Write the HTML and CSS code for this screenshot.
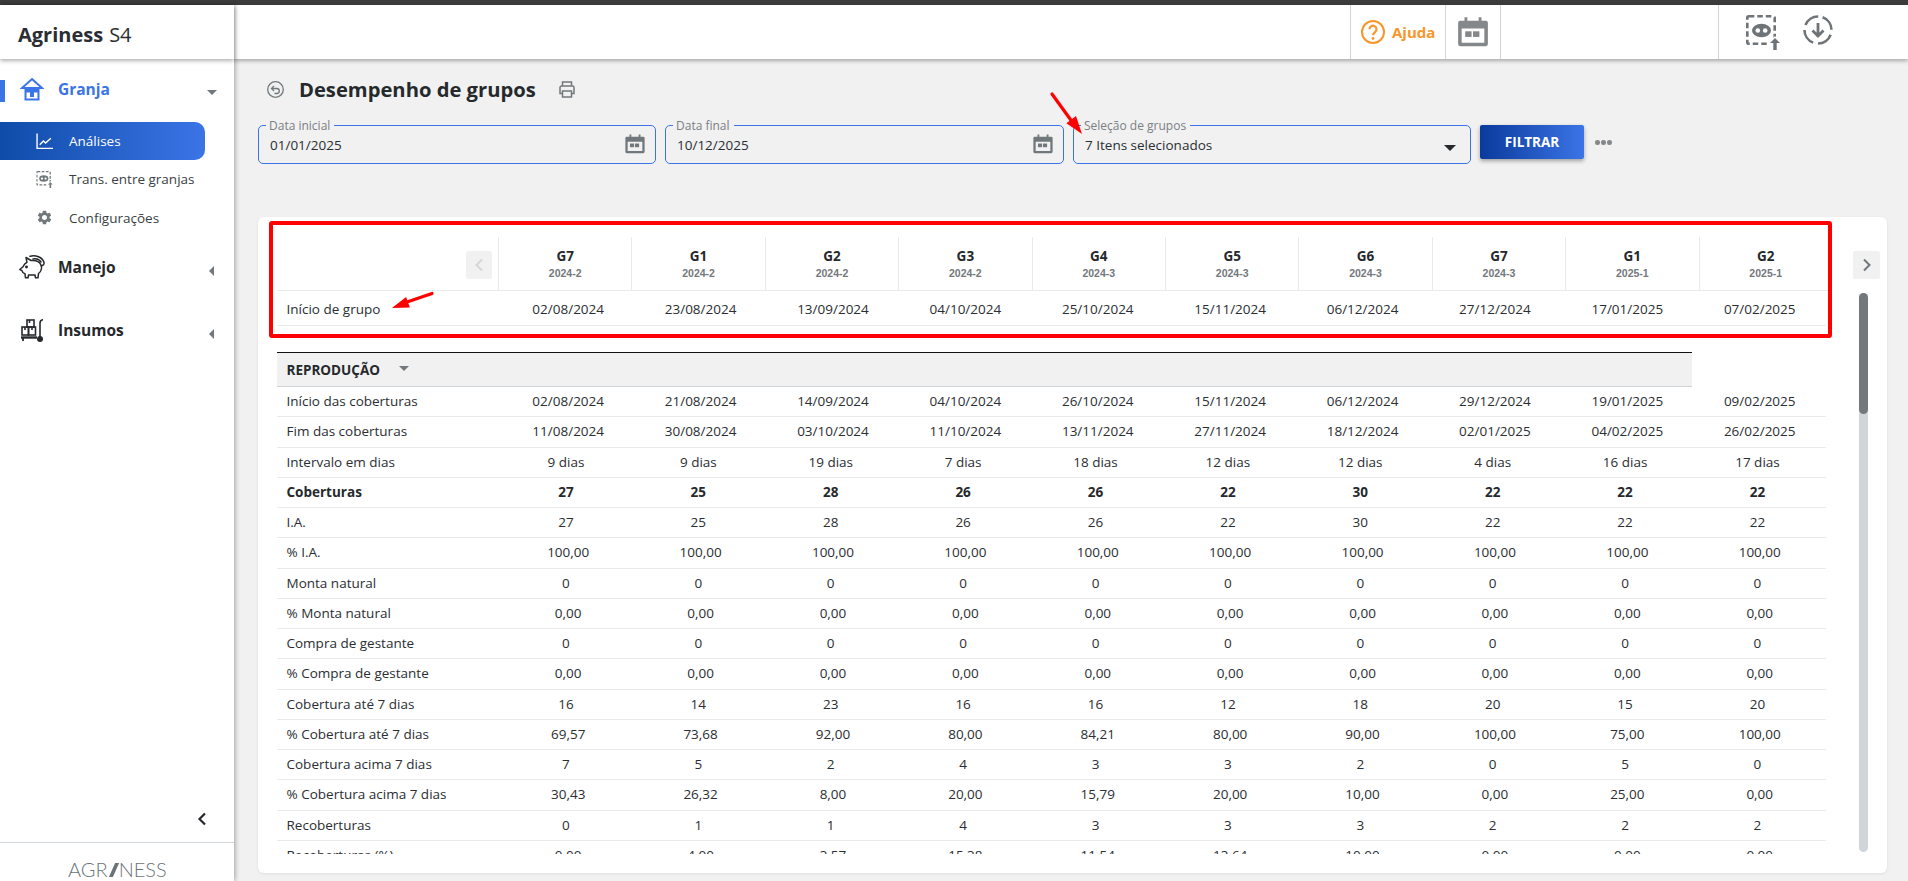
FILE: index.html
```html
<!DOCTYPE html>
<html lang="pt-BR">
<head>
<meta charset="utf-8">
<title>Desempenho de grupos</title>
<link rel="stylesheet" href="styles.css">
</head>
<body>
<svg class="sprite" aria-hidden="true">
  <symbol id="i-cal" viewBox="0 0 24 24"><path fill-rule="evenodd" d="M3 4h3V1.500h2V4h8V1.500h2V4h3a1.500 1.500 0 0 1 1.500 1.500v15A1.500 1.500 0 0 1 21 22H3a1.500 1.500 0 0 1-1.500-1.500v-15A1.500 1.500 0 0 1 3 4zm1 5.500V19.500h16V9.500z"/><rect x="6.500" y="11.500" width="4.500" height="4"/><rect x="12" y="11.500" width="4.500" height="4"/></symbol>
  <symbol id="i-eye" viewBox="0 0 34 35"><rect x="1.300" y="1.300" width="27.400" height="27.400" rx="1.500" fill="none" stroke="currentColor" stroke-width="2.600" stroke-dasharray="5.500 3"/><ellipse cx="15.500" cy="15.500" rx="9.500" ry="6.800"/><circle cx="11.800" cy="15.500" r="2.300" fill="#fff"/><circle cx="19.200" cy="15.500" r="2.300" fill="#fff"/><path d="M29 21L36 28H36V36H22V28z" fill="#fff"/><path d="M29 23l5 5h-3.300v7h-3.400v-7H24z"/></symbol>
</svg>

<div class="strip"></div>
<div class="app">
  <aside class="sidebar">
    <div class="brand"><b>Agriness</b> S4</div>
    <nav class="nav">
      <div class="group active">
        <svg class="g-icon" viewBox="0 0 24 24" fill="none" stroke="#3b74e6" stroke-width="2"><path d="M12 2L22 11H2z"/><path d="M5.500 11.500V22.500H18.500V11.500"/><path d="M5.500 12H18.500V15.500H14V20H10V15.500H5.500z" fill="#3b74e6" stroke="none"/></svg>
        <span class="g-label">Granja</span>
        <span class="tri-down"></span>
      </div>
      <a class="sub current">
        <svg class="s-icon" viewBox="0 0 16 15" fill="none" stroke="#fff" stroke-width="1.300"><path d="M1 0v14h15"/><path d="M3.500 10.500l3.500-3.500 2 2 5-4.500"/></svg>
        <span>Análises</span>
      </a>
      <a class="sub">
        <svg class="s-icon" viewBox="0 0 34 35" color="#71787c" fill="currentColor"><use href="#i-eye"/></svg>
        <span>Trans. entre granjas</span>
      </a>
      <a class="sub">
        <svg class="s-icon" viewBox="0 0 24 24" fill="#71787c"><path d="M19.140 12.940c.04-.3.06-.61.06-.94 0-.32-.02-.64-.07-.94l2.030-1.580c.18-.14.23-.41.12-.61l-1.920-3.320c-.12-.22-.37-.29-.59-.22l-2.390.96c-.5-.38-1.030-.7-1.620-.94l-.36-2.540c-.04-.24-.24-.41-.48-.41h-3.840c-.24 0-.43.17-.47.41l-.36 2.540c-.59.24-1.130.57-1.620.94l-2.390-.96c-.22-.08-.47 0-.59.22L2.740 8.870c-.12.21-.08.47.12.61l2.030 1.580c-.05.3-.09.63-.09.94s.02.64.07.94l-2.030 1.580c-.18.14-.23.41-.12.61l1.920 3.320c.12.22.37.29.59.22l2.390-.96c.5.38 1.030.7 1.620.94l.36 2.540c.05.24.24.41.48.41h3.840c.24 0 .44-.17.47-.41l.36-2.540c.59-.24 1.130-.56 1.620-.94l2.390.96c.22.08.47 0 .59-.22l1.920-3.320c.12-.22.07-.47-.12-.61l-2.010-1.580zM12 15.600c-1.980 0-3.600-1.620-3.600-3.600s1.620-3.600 3.600-3.600 3.600 1.620 3.600 3.600-1.620 3.600-3.600 3.600z"/></svg>
        <span>Configurações</span>
      </a>
      <div class="group">
        <svg class="g-icon pig" viewBox="0 0 26 24" fill="none" stroke="#26292c" stroke-width="1.500" stroke-linejoin="round" stroke-linecap="round"><path d="M.8 14.500L4 11.800C5 9.500 6.500 8 8 7.300L7 2.500l5 3C16.500 5 20.500 6.500 22 10c1.200 3.200 0 6.800-2.500 8.500L19 22.800h-2.500L16 20H9.500L9 22.800H6.500L6 18.800c-2-.6-2.800-2-3-3.200z"/><path d="M11 1.200C16.500-.2 23.500 2 25 7.500c.3 1.800-.8 3.200-2.800 3.200"/><path d="M14 4c3.500-.8 6.500.6 8 3"/><circle cx="7.500" cy="12" r=".7" fill="#26292c"/></svg>
        <span class="g-label dark">Manejo</span>
        <span class="tri-left"></span>
      </div>
      <div class="group">
        <svg class="g-icon cart" viewBox="0 0 24 24" fill="none" stroke="#26292c" stroke-width="1.600"><rect x="7" y="2" width="7" height="7"/><rect x="2" y="9" width="6.500" height="8"/><rect x="8.500" y="9" width="7" height="8"/><path d="M9.500 2v3M5 9v3M12 9v3"/><path d="M1 19.500H17" stroke-width="2.400"/><path d="M23 1.500c-1.800.5-3 1.800-3 3.500v14"/><path d="M3 20v3" stroke-width="1.800"/><circle cx="20" cy="21" r="3" fill="#26292c" stroke="none"/></svg>
        <span class="g-label dark">Insumos</span>
        <span class="tri-left"></span>
      </div>
    </nav>
    <div class="collapse">
      <svg viewBox="0 0 10 14" fill="none" stroke="#26292c" stroke-width="2.200"><path d="M8 1.500L2.500 7 8 12.500"/></svg>
    </div>
    <div class="maker">AGR<i class="slash"></i>NESS</div>
  </aside>

  <div class="content">
    <header class="topbar">
      <div class="t-space"></div>
      <div class="t-help">
        <svg class="help-i" viewBox="0 0 24 24" fill="none" stroke="#f7962b" stroke-width="2"><circle cx="12" cy="12" r="11"/><path d="M8.500 9.300a3.500 3.500 0 1 1 5.500 2.800c-1.200.9-2 1.500-2 3.200" stroke-width="2.200"/><circle cx="12" cy="18.500" r="1.400" fill="#f7962b" stroke="none"/></svg>
        <span>Ajuda</span>
      </div>
      <div class="t-cal"><svg viewBox="0 0 24 24" fill="#85888a"><use href="#i-cal"/></svg></div>
      <div class="t-gap"></div>
      <div class="t-tools">
        <svg class="tool-eye" viewBox="0 0 34 35" color="#6d7377" fill="currentColor"><use href="#i-eye"/></svg>
        <svg class="tool-dl" viewBox="0 0 30 30" fill="none" stroke="#6d7377"><circle cx="15" cy="15" r="13.500" stroke-width="2.600" stroke-dasharray="16.200 5" transform="rotate(-70 15 15)"/><path d="M15 8v13M9.500 15.500L15 21l5.500-5.500" stroke-width="2.800"/></svg>
      </div>
    </header>

    <main class="main">
      <div class="title-row">
        <svg class="back" viewBox="0 0 17 17" fill="none" stroke="#71787c" stroke-width="1.300"><circle cx="8.500" cy="8.500" r="7.800"/><path d="M4.800 7.500h5a2.500 2.500 0 0 1 0 5H7.500"/><path d="M7 5L4.500 7.500 7 10"/></svg>
        <h1>Desempenho de grupos</h1>
        <svg class="print" viewBox="0 0 16 17" fill="none" stroke="#71787c" stroke-width="1.500"><path d="M3.500 5V1h9v4"/><path d="M3.500 12.500H1V6.500A1.500 1.500 0 0 1 2.500 5h11A1.500 1.500 0 0 1 15 6.500v6h-2.500"/><path d="M3.500 10h9v6h-9z"/></svg>
      </div>

      <div class="filters">
        <div class="field">
          <label>Data inicial</label>
          <span class="value">01/01/2025</span>
          <svg class="f-cal" viewBox="0 0 24 24" fill="#71787c"><use href="#i-cal"/></svg>
        </div>
        <div class="field">
          <label>Data final</label>
          <span class="value">10/12/2025</span>
          <svg class="f-cal" viewBox="0 0 24 24" fill="#71787c"><use href="#i-cal"/></svg>
        </div>
        <div class="field">
          <label>Seleção de grupos</label>
          <span class="value">7 Itens selecionados</span>
          <span class="caret"></span>
        </div>
        <button class="btn">FILTRAR</button>
        <div class="dots"><i></i><i></i><i></i></div>
      </div>

      <section class="card">
        <div class="table">
          <div class="thead">
            <div class="h-first"><button class="pager off"><svg viewBox="0 0 10 14" fill="none" stroke="#d4d7da" stroke-width="2"><path d="M8 1.500L2.500 7 8 12.500"/></svg></button></div>
            <div class="h-col"><b>G7</b><small>2024-2</small></div>
            <div class="h-col"><b>G1</b><small>2024-2</small></div>
            <div class="h-col"><b>G2</b><small>2024-2</small></div>
            <div class="h-col"><b>G3</b><small>2024-2</small></div>
            <div class="h-col"><b>G4</b><small>2024-3</small></div>
            <div class="h-col"><b>G5</b><small>2024-3</small></div>
            <div class="h-col"><b>G6</b><small>2024-3</small></div>
            <div class="h-col"><b>G7</b><small>2024-3</small></div>
            <div class="h-col"><b>G1</b><small>2025-1</small></div>
            <div class="h-col"><b>G2</b><small>2025-1</small></div>
          </div>
          <div class="row start"><span>Início de grupo</span><span>02/08/2024</span><span>23/08/2024</span><span>13/09/2024</span><span>04/10/2024</span><span>25/10/2024</span><span>15/11/2024</span><span>06/12/2024</span><span>27/12/2024</span><span>17/01/2025</span><span>07/02/2025</span></div>

          <div class="scroll">
            <div class="section"><b>REPRODUÇÃO</b><span class="tri-down"></span></div>
            <div class="row"><span>Início das coberturas</span><span>02/08/2024</span><span>21/08/2024</span><span>14/09/2024</span><span>04/10/2024</span><span>26/10/2024</span><span>15/11/2024</span><span>06/12/2024</span><span>29/12/2024</span><span>19/01/2025</span><span>09/02/2025</span></div>
            <div class="row"><span>Fim das coberturas</span><span>11/08/2024</span><span>30/08/2024</span><span>03/10/2024</span><span>11/10/2024</span><span>13/11/2024</span><span>27/11/2024</span><span>18/12/2024</span><span>02/01/2025</span><span>04/02/2025</span><span>26/02/2025</span></div>
            <div class="row int"><span>Intervalo em dias</span><span>9 dias</span><span>9 dias</span><span>19 dias</span><span>7 dias</span><span>18 dias</span><span>12 dias</span><span>12 dias</span><span>4 dias</span><span>16 dias</span><span>17 dias</span></div>
            <div class="row int strong"><span>Coberturas</span><span>27</span><span>25</span><span>28</span><span>26</span><span>26</span><span>22</span><span>30</span><span>22</span><span>22</span><span>22</span></div>
            <div class="row int"><span>I.A.</span><span>27</span><span>25</span><span>28</span><span>26</span><span>26</span><span>22</span><span>30</span><span>22</span><span>22</span><span>22</span></div>
            <div class="row"><span>% I.A.</span><span>100,00</span><span>100,00</span><span>100,00</span><span>100,00</span><span>100,00</span><span>100,00</span><span>100,00</span><span>100,00</span><span>100,00</span><span>100,00</span></div>
            <div class="row int"><span>Monta natural</span><span>0</span><span>0</span><span>0</span><span>0</span><span>0</span><span>0</span><span>0</span><span>0</span><span>0</span><span>0</span></div>
            <div class="row"><span>% Monta natural</span><span>0,00</span><span>0,00</span><span>0,00</span><span>0,00</span><span>0,00</span><span>0,00</span><span>0,00</span><span>0,00</span><span>0,00</span><span>0,00</span></div>
            <div class="row int"><span>Compra de gestante</span><span>0</span><span>0</span><span>0</span><span>0</span><span>0</span><span>0</span><span>0</span><span>0</span><span>0</span><span>0</span></div>
            <div class="row"><span>% Compra de gestante</span><span>0,00</span><span>0,00</span><span>0,00</span><span>0,00</span><span>0,00</span><span>0,00</span><span>0,00</span><span>0,00</span><span>0,00</span><span>0,00</span></div>
            <div class="row int"><span>Cobertura até 7 dias</span><span>16</span><span>14</span><span>23</span><span>16</span><span>16</span><span>12</span><span>18</span><span>20</span><span>15</span><span>20</span></div>
            <div class="row"><span>% Cobertura até 7 dias</span><span>69,57</span><span>73,68</span><span>92,00</span><span>80,00</span><span>84,21</span><span>80,00</span><span>90,00</span><span>100,00</span><span>75,00</span><span>100,00</span></div>
            <div class="row int"><span>Cobertura acima 7 dias</span><span>7</span><span>5</span><span>2</span><span>4</span><span>3</span><span>3</span><span>2</span><span>0</span><span>5</span><span>0</span></div>
            <div class="row"><span>% Cobertura acima 7 dias</span><span>30,43</span><span>26,32</span><span>8,00</span><span>20,00</span><span>15,79</span><span>20,00</span><span>10,00</span><span>0,00</span><span>25,00</span><span>0,00</span></div>
            <div class="row int"><span>Recoberturas</span><span>0</span><span>1</span><span>1</span><span>4</span><span>3</span><span>3</span><span>3</span><span>2</span><span>2</span><span>2</span></div>
            <div class="row"><span>Recoberturas (%)</span><span>0,00</span><span>4,00</span><span>3,57</span><span>15,38</span><span>11,54</span><span>13,64</span><span>10,00</span><span>0,00</span><span>0,00</span><span>0,00</span></div>
          </div>
        </div>
        <div class="rail">
          <button class="pager"><svg viewBox="0 0 10 14" fill="none" stroke="#71787c" stroke-width="2"><path d="M2 1.500L7.500 7 2 12.500"/></svg></button>
          <div class="track"><div class="thumb"></div></div>
        </div>
        <div class="redbox"></div>
      </section>
    </main>
  </div>
</div>

<svg class="annot" viewBox="0 0 1908 881" aria-hidden="true">
  <path d="M1052 94L1073 123" stroke="#f00" stroke-width="3.200" stroke-linecap="round"/>
  <path d="M1082 134L1066.400 123.200 1076 116z" fill="#f00"/>
  <path d="M432 293.500L407 302" stroke="#f00" stroke-width="3.200" stroke-linecap="round"/>
  <path d="M392 308L409.900 307.400 406.100 297z" fill="#f00"/>
</svg>
</body>
</html>
```

FILE: styles.css
```css
* { box-sizing: border-box; }
html, body { margin: 0; height: 881px; overflow: hidden; }
body {
  font-family: "Open Sans", "Noto Sans", sans-serif;
  font-size: 13.5px;
  color: #2a2e32;
  background: #f1f1f1;
  position: relative;
}
.sprite { display: none; }
.strip { height: 5px; background: #3c3c3c; }
.app { display: flex; height: 876px; }

/* Sidebar */
.sidebar {
  width: 234px;
  flex: none;
  background: #fff;
  display: flex;
  flex-direction: column;
  box-shadow: 1px 0 5px rgba(0,0,0,.35);
  position: relative;
  z-index: 2;
}
.brand {
  height: 54px;
  padding: 4px 0 0 18px;
  display: flex;
  align-items: center;
  gap: 6px;
  font-size: 20px;
  color: #2a2e32;
  box-shadow: 0 2px 4px rgba(0,0,0,.3);
}
.brand b { font-weight: 700; }
.nav { display: flex; flex-direction: column; }
.group {
  height: 60px;
  margin-bottom: 3px;
  display: flex;
  align-items: center;
  position: relative;
  padding-left: 58px;
}
.group .g-icon { position: absolute; left: 20px; top: 18px; width: 24px; height: 24px; }
.group .pig { left: 19px; width: 26px; }
.group .cart { left: 20px; }
.group.active::before {
  content: "";
  position: absolute;
  left: 0;
  top: 21px;
  width: 5px;
  height: 22px;
  background: #3b74e6;
}
.g-label { font-size: 15.5px; font-weight: 700; color: #3b74e6; }
.g-label.dark { color: #26292c; }
.tri-down {
  width: 0; height: 0;
  border-left: 5px solid transparent;
  border-right: 5px solid transparent;
  border-top: 5px solid #73787c;
}
.group .tri-down { position: absolute; left: 207px; top: 31px; }
.tri-left {
  position: absolute;
  left: 209px;
  top: 29px;
  width: 0; height: 0;
  border-top: 5px solid transparent;
  border-bottom: 5px solid transparent;
  border-right: 5px solid #73787c;
}
.sub {
  height: 38.33px;
  display: flex;
  align-items: center;
  padding-left: 36px;
  gap: 16px;
  font-size: 13.5px;
  color: #3a3f44;
  width: 205px;
}
.sub .s-icon { width: 17px; height: 17px; flex: none; }
.sub.current {
  color: #fff;
  background: linear-gradient(90deg, #0f4ca8, #3b74e6);
  border-radius: 0 10px 10px 0;
}
.collapse {
  margin-top: auto;
  height: 52px;
  display: flex;
  align-items: center;
  justify-content: flex-end;
  padding: 0 27px 0 0;
  border-bottom: 1px solid #d0d5d9;
}
.collapse svg { width: 10px; height: 14px; margin-top: 4px; }
.maker {
  height: 38px;
  padding: 13px 0 0 68px;
  font-family: "Lato", sans-serif;
  font-weight: 300;
  font-size: 20px;
  line-height: 26px;
  color: #6c7378;
  white-space: nowrap;
}
.slash {
  display: inline-block;
  width: 3.500px;
  height: 14px;
  margin: 0 3.500px 0 4px;
  background: #6c7378;
  transform: skewX(-24deg);
}

/* Top bar */
.content { flex: 1; min-width: 0; display: flex; flex-direction: column; }
.topbar {
  height: 54px;
  flex: none;
  background: #fff;
  display: flex;
  box-shadow: 0 2px 4px rgba(0,0,0,.3);
  position: relative;
  z-index: 1;
}
.t-space { width: 1116px; }
.t-help {
  width: 95px;
  border-left: 1px solid #d0d5d9;
  display: flex;
  align-items: center;
  gap: 7px;
  padding-left: 10px;
  color: #f7962b;
  font-weight: 700;
  font-size: 15px;
}
.help-i { width: 24px; height: 24px; flex: none; }
.t-cal {
  width: 55px;
  border-left: 1px solid #d0d5d9;
  display: flex;
  align-items: center;
  justify-content: center;
}
.t-cal svg { width: 34px; height: 34px; }
.t-gap { width: 218px; border-left: 1px solid #d0d5d9; }
.t-tools {
  flex: 1;
  border-left: 1px solid #d0d5d9;
  display: flex;
  padding: 10px 0 0 27px;
  gap: 23px;
  align-items: flex-start;
}
.tool-eye { width: 34px; height: 35px; }
.tool-dl { width: 30px; height: 30px; }

/* Main */
.main { flex: 1; padding: 0 21px 0 24px; min-height: 0; display: flex; flex-direction: column; }
.title-row {
  height: 28px;
  margin: 16px 0 22px;
  padding-left: 9px;
  display: flex;
  align-items: center;
}
.back { width: 17px; height: 17px; margin-right: 15px; }
h1 { margin: 0; font-size: 20.2px; font-weight: 700; color: #26292c; line-height: 28px; }
.print { width: 16px; height: 17px; margin-left: 23px; }

.filters { display: flex; align-items: flex-start; gap: 9px; height: 39px; }
.field {
  width: 398px;
  height: 39px;
  border: 1px solid #3b74e6;
  border-radius: 5px;
  position: relative;
  display: flex;
  align-items: center;
  padding: 0 0 0 11px;
}
.field:nth-child(2) { width: 399px; }
.field label {
  position: absolute;
  left: 7px;
  top: -7px;
  padding: 0 4px 0 3px;
  line-height: 13px;
  font-size: 12px;
  color: #7a7f84;
  background: #f1f1f1;
}
.value { font-size: 13.5px; line-height: 20px; color: #2a2e32; margin-top: 1px; }
.f-cal { position: absolute; right: 9px; top: 7px; width: 22px; height: 22px; }
.caret {
  position: absolute;
  right: 14px;
  top: 19px;
  width: 0; height: 0;
  border-left: 6px solid transparent;
  border-right: 6px solid transparent;
  border-top: 6px solid #26292c;
}
.btn {
  width: 104px;
  height: 34px;
  border: 0;
  border-radius: 2px;
  background: linear-gradient(90deg, #0a3a9c, #3b74e6);
  color: #fff;
  font: 700 13.5px "Open Sans", sans-serif;
  box-shadow: 0 2px 4px rgba(0,0,0,.35);
}
.dots { display: flex; gap: 1.500px; margin: 15px 0 0 2px; }
.dots i { width: 4.500px; height: 4.500px; border-radius: 50%; background: #85888a; }

/* Card */
.card {
  margin-top: 53px;
  height: 656px;
  flex: none;
  background: #fff;
  border-radius: 6px;
  box-shadow: 0 1px 3px rgba(0,0,0,.08);
  position: relative;
  display: flex;
  padding: 20px 0 0 19px;
}
.table { width: 1555px; flex: none; }
.thead { display: grid; grid-template-columns: 221px repeat(10, 133.400px); height: 54px; border-bottom: 1px solid #e8eaec; width: 1555px; }
.h-first { display: flex; justify-content: flex-end; padding: 14px 6px 0 0; }
.h-first .pager { width: 26px; }
.h-col {
  border-left: 1px solid #e8eaec;
  display: flex;
  flex-direction: column;
  align-items: center;
  padding-top: 9px;
}
.h-col b { font-size: 13.5px; line-height: 20px; color: #26292c; }
.h-col small { font: 700 10.5px/14px "Liberation Sans", sans-serif; color: #73787c; }
.pager {
  width: 27px;
  height: 28px;
  padding: 0;
  border: 0;
  border-radius: 2px;
  background: #f1f1f1;
  display: flex;
  align-items: center;
  justify-content: center;
}
.pager svg { width: 10px; height: 14px; }

.row {
  display: grid;
  grid-template-columns: 225px repeat(10, 132.400px);
  width: 1549px;
  height: 30.270px;
  line-height: 29px;
  border-bottom: 1px solid #e8eaec;
  text-align: center;
}
.row span:first-child { text-align: left; padding-left: 9.500px; }
.row.int span:not(:first-child) { padding-right: 4.500px; }
.row.strong { font-weight: 700; color: #26292c; }
.row.start { height: 35px; line-height: 36px; }
.scroll { margin-top: 26px; height: 502px; overflow: hidden; }
.section {
  width: 1415px;
  height: 35px;
  background: #f1f1f1;
  border-top: 1px solid #111;
  border-bottom: 1.500px solid #d0d5d9;
  padding-left: 9.500px;
  display: flex;
  align-items: center;
  gap: 19px;
}
.section b { font-size: 13.5px; color: #26292c; }
.section .tri-down { margin-top: -3px; }

.rail {
  margin: 14px 0 0 21px;
  width: 27px;
  display: flex;
  flex-direction: column;
  align-items: flex-start;
}
.track {
  margin: 14px 0 0 6px;
  width: 9px;
  height: 559px;
  border-radius: 4.500px;
  background: #d0d5da;
}
.thumb { height: 121px; border-radius: 4.500px; background: #73787c; }

.redbox {
  position: absolute;
  left: 11px;
  top: 4px;
  width: 1563px;
  height: 117px;
  border: 4px solid #f00;
  border-radius: 3px;
  pointer-events: none;
}
.annot { position: absolute; left: 0; top: 0; width: 1908px; height: 881px; z-index: 5; pointer-events: none; }
```
